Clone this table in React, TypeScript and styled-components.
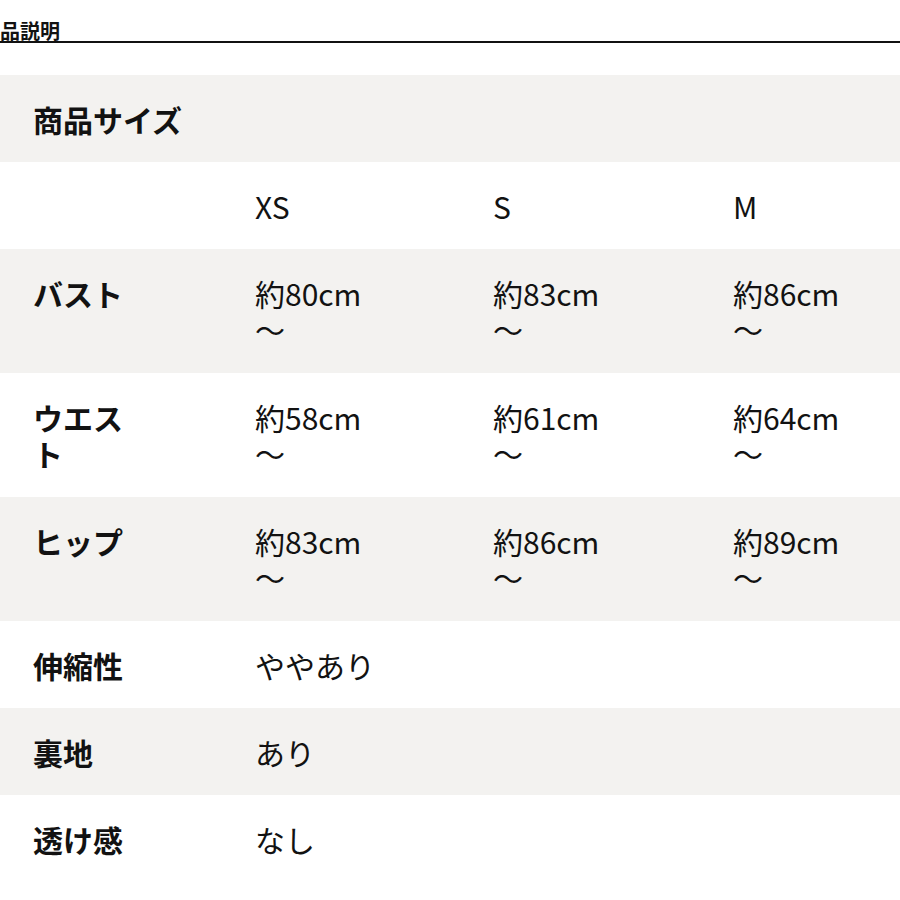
import React from "react";
import styled, { createGlobalStyle } from "styled-components";

const GlobalStyle = createGlobalStyle`
  body {
    margin: 0;
    background: #fff;
    overflow: hidden;
    font-family: "Noto Sans CJK JP", "Noto Sans", sans-serif;
    color: #121212;
  }
`;

const Page = styled.div`
  width: 900px;
  overflow: hidden;
`;

const Heading = styled.h2`
  margin: 0 0 32px;
  height: 41px;
  display: flex;
  align-items: flex-end;
  border-bottom: 2px solid #111;
  font-size: 20px;
  line-height: 20px;
  font-weight: 700;
  text-indent: -20px;
  white-space: nowrap;
`;

const Table = styled.div`
  display: flex;
  flex-direction: column;
`;

const Row = styled.div<{ $shade: boolean; $tall?: boolean }>`
  display: grid;
  grid-template-columns: 222px 238px 240px 1fr;
  background: ${(p) => (p.$shade ? "#f3f2f0" : "#fff")};
  padding: 26px 0 ${(p) => (p.$tall ? "26px" : "25px")};
  font-size: 30px;
  line-height: 36px;
`;

const Label = styled.div<{ $span?: boolean }>`
  padding-left: 33px;
  width: 112px;
  font-weight: 700;
  ${(p) => (p.$span ? "grid-column: 1 / -1; width: auto;" : "")}
`;

const Cell = styled.div<{ $span?: boolean }>`
  padding-left: 33px;
  font-weight: 400;
  white-space: nowrap;
  ${(p) => (p.$span ? "grid-column: 2 / -1;" : "")}
`;

const Line = styled.div``;

type SizeRow = { label: string; values: string[] };

const measures: SizeRow[] = [
  { label: "バスト", values: ["約80cm", "約83cm", "約86cm"] },
  { label: "ウエスト", values: ["約58cm", "約61cm", "約64cm"] },
  { label: "ヒップ", values: ["約83cm", "約86cm", "約89cm"] },
];

const notes = [
  { label: "伸縮性", value: "ややあり" },
  { label: "裏地", value: "あり" },
  { label: "透け感", value: "なし" },
];

export default function App() {
  let i = 0;
  return (
    <Page>
      <GlobalStyle />
      <Heading>商品説明</Heading>
      <Table>
        <Row $shade={i++ % 2 === 0}>
          <Label $span>商品サイズ</Label>
        </Row>
        <Row $shade={i++ % 2 === 0}>
          <Label />
          <Cell>XS</Cell>
          <Cell>S</Cell>
          <Cell>M</Cell>
        </Row>
        {measures.map((m) => (
          <Row key={m.label} $shade={i++ % 2 === 0} $tall>
            <Label>{m.label}</Label>
            {m.values.map((v) => (
              <Cell key={v}>
                <Line>{v}</Line>
                <Line>～</Line>
              </Cell>
            ))}
          </Row>
        ))}
        {notes.map((n) => (
          <Row key={n.label} $shade={i++ % 2 === 0}>
            <Label>{n.label}</Label>
            <Cell $span>{n.value}</Cell>
          </Row>
        ))}
      </Table>
    </Page>
  );
}
